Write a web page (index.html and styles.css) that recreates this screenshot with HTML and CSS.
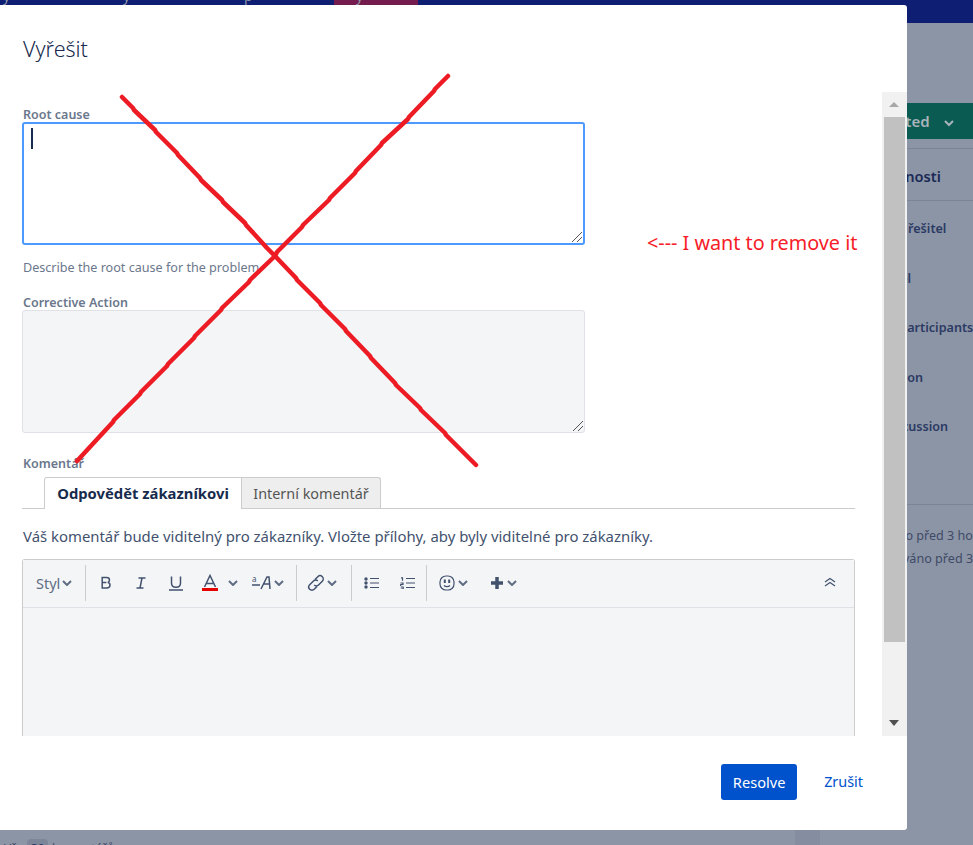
FILE: index.html
```html
<!DOCTYPE html>
<html lang="cs">
<head>
<meta charset="utf-8">
<title>Vyřešit</title>
<link rel="stylesheet" href="styles.css">
</head>
<body>
<div class="page">
  <nav class="topbar">
    <span class="nav-item nav-d">y</span>
    <span class="nav-item nav-a">y</span>
    <span class="nav-item nav-b">p</span>
    <span class="nav-active"><span class="nav-item nav-c">y</span></span>
  </nav>
  <aside class="side">
    <div class="status-row"><span class="status">Created <svg class="status-chev" viewBox="0 0 12 8" width="12" height="8"><path d="M2 2l4 4 4-4" fill="none" stroke="currentColor" stroke-width="2"/></svg></span></div>
    <h3 class="side-head">Podrobnosti</h3>
    <ul class="side-list">
      <li class="l1">Přiřazený řešitel</li>
      <li class="l2">Label</li>
      <li class="l3">Request participants</li>
      <li class="l4">Organization</li>
      <li class="l5">Discussion</li>
    </ul>
    <div class="side-foot">
      <p class="f1">Vytvořeno před 3 hodinami</p>
      <p class="f2">Aktualizováno před 3 hodinami</p>
    </div>
  </aside>
  <div class="gutter"></div>
  <div class="bottom-text"><span>Vše</span><span class="count">30</span><span>komentářů</span></div>
</div>

<section class="modal">
  <header class="modal-head"><h1>Vyřešit</h1></header>
  <div class="modal-body">
    <div class="form">
      <label class="label">Root cause</label>
      <div class="ta ta-focus"><span class="caret"></span><svg class="grip" viewBox="0 0 12 12" width="12" height="12"><path d="M1 11L11 1M6 11l5-5" stroke="#555" stroke-width="1" fill="none"/></svg></div>
      <p class="help">Describe the root cause for the problem</p>
      <label class="label label-2">Corrective Action</label>
      <div class="ta ta-off"><svg class="grip" viewBox="0 0 12 12" width="12" height="12"><path d="M1 11L11 1M6 11l5-5" stroke="#555" stroke-width="1" fill="none"/></svg></div>
      <label class="label label-3">Komentář</label>
      <div class="tabs">
        <span class="tab tab-on">Odpovědět zákazníkovi</span>
        <span class="tab tab-off">Interní komentář</span>
      </div>
      <p class="note">Váš komentář bude viditelný pro zákazníky. Vložte přílohy, aby byly viditelné pro zákazníky.</p>
      <div class="editor">
        <div class="toolbar">
          <div class="group g-style"><span class="styl">Styl</span><svg class="chev" viewBox="0 0 10 6" width="10" height="6"><path d="M1 1l4 4 4-4"/></svg></div>
          <div class="group g-text">
            <svg class="ic" viewBox="0 0 16 16" width="16" height="16"><path class="s" d="M4.200 2.500h4.400c1.800 0 2.900 1 2.900 2.600 0 1.200-.7 2-1.700 2.300 1.300.2 2.200 1.200 2.200 2.600 0 1.900-1.300 3-3.300 3H4.200zM4.200 7.600h4.200"/></svg>
            <svg class="ic i-i" viewBox="0 0 16 16" width="16" height="16"><path class="s" d="M5.500 3h7M3.500 13h7M9 3l-2 10"/></svg>
            <svg class="ic i-u" viewBox="0 0 16 16" width="16" height="16"><path class="s" d="M3.500 1.500v6.500c0 3 1.800 4.300 4.500 4.300s4.500-1.300 4.500-4.300V1.500M1 15h14"/></svg>
            <svg class="ic i-a" viewBox="0 0 18 18" width="18" height="18"><path class="s" d="M3.500 13L9 1.500 14.500 13M5.200 9.500h7.600"/><path d="M1 15.500h16" stroke="#e60000" stroke-width="3" fill="none"/></svg>
            <svg class="chev c-a" viewBox="0 0 10 6" width="10" height="6"><path d="M1 1l4 4 4-4"/></svg>
            <svg class="ic i-f" viewBox="0 0 24 16" width="24" height="16"><text x="0" y="7" class="ic-text">a</text><path class="s" d="M0 10h8M9 14L15 2h2l1 12M11 9h7" /></svg>
            <svg class="chev c-f" viewBox="0 0 10 6" width="10" height="6"><path d="M1 1l4 4 4-4"/></svg>
          </div>
          <div class="group g-link">
            <svg class="ic" viewBox="0 0 18 18" width="18" height="18"><path class="s" d="M8 5.500l2.800-2.800a3 3 0 0 1 4.500 4.500l-3.800 3.800a3 3 0 0 1-4.300 0M10 12.500l-2.800 2.800a3 3 0 0 1-4.500-4.500l3.800-3.800a3 3 0 0 1 4.300 0"/></svg>
            <svg class="chev" viewBox="0 0 10 6" width="10" height="6"><path d="M1 1l4 4 4-4"/></svg>
          </div>
          <div class="group g-list">
            <svg class="ic" viewBox="0 0 16 12" width="16" height="12"><circle cx="2" cy="2" r="1.700" class="d"/><circle cx="2" cy="6" r="1.700" class="d"/><circle cx="2" cy="10" r="1.700" class="d"/><path class="t" d="M6 1.500h9M6 6h9M6 10.500h9"/></svg>
            <svg class="ic i-ol" viewBox="0 0 16 12" width="16" height="12"><path class="t" d="M1 .8h1.500v3M.5 6h2.500v1.500H.7V9M.7 10h2.500v2H.7M6 1.500h9M6 6h9M6 10.500h9"/></svg>
          </div>
          <div class="group g-emoji">
            <svg class="ic" viewBox="0 0 16 16" width="16" height="16"><rect x="1" y="1" width="14" height="14" rx="6" class="t"/><path d="M5.800 4.500v3.500M10.200 4.500v3.500" stroke="#42526e" stroke-width="2"/><path class="t" d="M5 10.500c1.500 1.600 4.500 1.600 6 0"/></svg>
            <svg class="chev c-e" viewBox="0 0 10 6" width="10" height="6"><path d="M1 1l4 4 4-4"/></svg>
            <svg class="ic i-plus" viewBox="0 0 14 14" width="14" height="14"><path d="M7 1v12M1 7h12" stroke="#42526e" stroke-width="3.500" fill="none"/></svg>
            <svg class="chev c-plus" viewBox="0 0 10 6" width="10" height="6"><path d="M1 1l4 4 4-4"/></svg>
          </div>
          <svg class="collapse" viewBox="0 0 12 10" width="12" height="10"><path d="M1 5l5-3.500L11 5M1 9l5-3.500L11 9" fill="none" stroke="#42526e" stroke-width="1.200"/></svg>
        </div>
        <div class="edit-area"></div>
      </div>
    </div>
    <div class="scrollbar">
      <span class="arrow-up"></span>
      <span class="thumb"></span>
      <span class="arrow-down"></span>
    </div>
  </div>
  <footer class="modal-foot">
    <button class="btn-primary">Resolve</button>
    <a class="btn-link">Zrušit</a>
  </footer>
</section>

<svg class="scrawl" width="973" height="845" viewBox="0 0 973 845">
  <path d="M122 97L133 108 134 110 155 130 156 132 177 153 178 155 200 178 201 180 222 200 223 202 245 223 246 225 267 248 275 256 296 278 297 280 320 303 321 305 345 329 346 331 370 356 371 358 395 383 396 385 420 408 421 410 445 433 446 435 476 465" fill="none" stroke="#ed1c24" stroke-width="4.500" stroke-linecap="round" stroke-linejoin="round"/>
  <path d="M448 76L435 89 434 91 409 117 408 119 382 143 381 145 356 171 355 173 330 198 329 200 303 225 302 227 277 252 275 256 250 280 249 282 222 308 221 310 195 336 194 338 168 364 167 366 141 392 140 394 114 420 113 422 77 461" fill="none" stroke="#ed1c24" stroke-width="4.500" stroke-linecap="round" stroke-linejoin="round"/>
</svg>
<p class="annotation">&lt;--- I want to remove it</p>
</body>
</html>
```

FILE: styles.css
```css
* { box-sizing: border-box; }
html, body { margin: 0; padding: 0; }
body {
  width: 973px;
  height: 845px;
  overflow: hidden;
  position: relative;
  font-family: "Noto Sans", "Open Sans", "Liberation Sans", sans-serif;
  background: #8c95a6;
}
.page { height: 845px; position: relative; overflow: hidden; }

.topbar { height: 23px; background: #0d1e73; position: relative; }
.nav-active { position: absolute; left: 334px; top: 0; width: 84px; height: 5px; background: #751c4e; overflow: hidden; }
.nav-item { color: #8c95a6; font-size: 14px; line-height: 14px; position: absolute; top: -11px; }
.nav-d { left: 3px; }
.nav-a { left: 123px; }
.nav-b { left: 244px; }
.nav-c { left: 22px; }

.side { position: absolute; left: 820px; top: 103px; width: 153px; color: #172b4d; }
.status-row { height: 36px; background: #0a5c53; color: #a8b3ba; font-size: 15px; font-weight: 600; line-height: 36px; padding-left: 52px; white-space: nowrap; }
.status-chev { margin-left: 9px; vertical-align: 0; }
.side-head { margin: 9px 0 0; height: 53px; border-top: 1px solid #7a8496; border-bottom: 1px solid #7a8496; font-size: 14.600px; font-weight: 600; line-height: 54px; padding-left: 34px; color: #1b2a55; }
.side-list { list-style: none; margin: 0; padding: 0; font-size: 12.600px; font-weight: 600; color: #2b3a63; white-space: nowrap; }
.side-list li { height: 49.500px; line-height: 55px; }
.l1 { padding-left: 27px; }
.l2 { padding-left: 58px; }
.l3 { padding-left: 26px; }
.l4 { padding-left: 23px; }
.l5 { padding-left: 63px; }
.side-foot { margin-top: 55px; border-top: 1px solid #7a8496; padding-top: 22px; font-size: 12.600px; color: #3f4a66; white-space: nowrap; }
.side-foot p { margin: 0; height: 23px; line-height: 18px; }
.f1 { padding-left: 33px; }
.f2 { padding-left: 29px; }

.gutter { position: absolute; left: 795px; top: 830px; width: 25px; height: 15px; background: #858ea0; }
.bottom-text { position: absolute; left: 4px; top: 841px; display: flex; font-size: 12px; line-height: 16px; color: #3f4a66; white-space: nowrap; }
.count { background: #7d8699; border-radius: 4px 4px 0 0; margin: -2px 4px 0 0; padding: 2px 4px 0; width: 21px; font-weight: 600; color: #2b3a63; }
.bottom-text span:first-child { width: 23px; }

.modal { position: absolute; left: 0; top: 5px; width: 907px; height: 825px; background: #fff; border-radius: 0 3px 3px 0; display: flex; flex-direction: column; }
.modal-head { height: 87px; padding: 28px 23px 0; }
.modal-head h1 { margin: 0; font-size: 21.500px; font-weight: 300; line-height: 32px; color: #172b4d; }
.modal-body { height: 644px; display: flex; overflow: hidden; }
.form { width: 882px; padding: 14px 27px 0 22px; flex: none; }

.label { display: block; font-size: 12.500px; font-weight: 600; height: 16px; line-height: 18px; color: #6b778c; padding-left: 1px; }
.label-2 { margin-top: 17px; }
.label-3 { margin-top: 22px; }
.ta { width: 563px; border-radius: 3px; position: relative; }
.ta-focus { height: 123px; border: 2px solid #4c9aff; background: #fff; }
.ta-off { height: 123px; border: 1px solid #dfe1e6; background: #f4f5f7; }
.caret { position: absolute; left: 7px; top: 4px; width: 2px; height: 21px; background: #172b4d; }
.grip { position: absolute; right: 0; bottom: 0; }
.help { margin: 14px 0 0 1px; font-size: 12.600px; line-height: 18px; color: #6b778c; }

.tabs { display: flex; height: 32px; padding-left: 22px; border-bottom: 1px solid #ccc; margin-top: 6px; }
.tab { height: 31px; line-height: 31px; border: 1px solid #ccc; border-bottom: 0; text-align: center; }
.tab-on { width: 198px; font-size: 14.800px; font-weight: 700; color: #172b4d; background: #fff; height: 32px; border-radius: 3px 0 0 0; }
.tab-off { width: 140px; margin-left: -1px; font-size: 14.400px; background: #eee; color: #555; border-radius: 0 3px 0 0; }
.note { margin: 17px 0 0 1px; font-size: 14.900px; line-height: 20px; color: #42526e; white-space: nowrap; }

.editor { margin-top: 13px; width: 833px; border: 1px solid #ccc; border-bottom: 0; border-radius: 3px 3px 0 0; }
.toolbar { height: 48px; background: #f4f5f7; border-bottom: 1px solid #dfe1e6; display: flex; align-items: center; padding: 0 0 1px 13px; position: relative; color: #42526e; }
.group { display: flex; align-items: center; height: 36px; border-right: 1px solid #ccc; }
.g-style { width: 50px; }
.styl { font-size: 14.500px; color: #5e6c84; margin-top: -1px; }
.g-text { width: 211px; padding-left: 12px; }
.g-link { width: 55px; padding-left: 10px; }
.g-list { width: 75px; padding-left: 12px; }
.g-emoji { border-right: 0; padding-left: 12px; }
.ic { flex: none; display: block; }
.s { fill: none; stroke: #42526e; stroke-width: 1.500; }
.t { fill: none; stroke: #42526e; stroke-width: 1.200; }
.d { fill: #42526e; }
.ic-text { font-size: 8px; fill: #42526e; font-family: "Noto Sans", sans-serif; }
.chev { flex: none; margin-left: 2px; }
.chev path { fill: none; stroke: #5e6c84; stroke-width: 2; }
.i-i { margin-left: 19px; }
.i-u { margin-left: 19px; }
.i-a { margin-left: 17px; }
.c-a { margin-left: 9px; }
.i-f { margin-left: 14px; }
.c-f { margin-left: -2px; }
.i-ol { margin-left: 20px; }
.c-e { margin-left: 3px; }
.i-plus { margin-left: 22px; }
.c-plus { margin-left: 3px; }
.collapse { position: absolute; right: 18px; top: 17px; }
.edit-area { height: 140px; background: #f4f5f7; }

.scrollbar { width: 25px; flex: none; background: #f1f1f1; position: relative; }
.thumb { position: absolute; left: 2px; top: 25px; width: 21px; height: 525px; background: #c1c1c1; }
.arrow-up { position: absolute; left: 7px; top: 10px; border: 5.500px solid transparent; border-top: 0; border-bottom: 5px solid #a8a8a8; }
.arrow-down { position: absolute; left: 7px; top: 628px; border: 5.500px solid transparent; border-bottom: 0; border-top: 6px solid #505050; }

.modal-foot { flex: 1; display: flex; align-items: flex-start; padding: 28px 44px 0 0; justify-content: flex-end; }
.btn-primary { width: 76px; height: 36px; border: 0; border-radius: 3px; background: #0052cc; color: #fff; font: inherit; font-size: 14.600px; padding: 0; }
.btn-link { margin-left: 27px; font-size: 14.400px; line-height: 36px; color: #0052cc; }

.scrawl { position: absolute; left: 0; top: 0; pointer-events: none; }
.annotation { position: absolute; left: 647px; top: 230px; margin: 0; font-size: 19.800px; line-height: 26px; color: #f61c28; white-space: nowrap; }
```
